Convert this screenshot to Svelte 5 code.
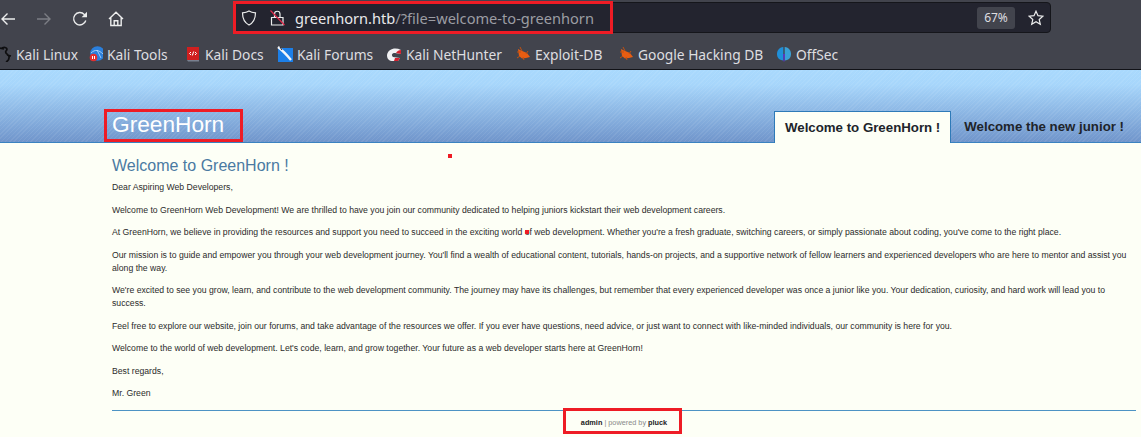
<script>
	// width of each toolbar item, text and icon together
	const bookmarks = [
		{ label: 'Kali Linux', icon: 'dragon', width: 91 },
		{ label: 'Kali Tools', icon: 'tools', width: 98 },
		{ label: 'Kali Docs', icon: 'docs', width: 92 },
		{ label: 'Kali Forums', icon: 'forums', width: 109 },
		{ label: 'Kali NetHunter', icon: 'hunter', width: 129 },
		{ label: 'Exploit-DB', icon: 'bug', width: 103 },
		{ label: 'Google Hacking DB', icon: 'bug', width: 158 },
		{ label: 'OffSec', icon: 'offsec', width: 70 }
	];

	const paragraphs = [
		'Dear Aspiring Web Developers,',
		'Welcome to GreenHorn Web Development! We are thrilled to have you join our community dedicated to helping juniors kickstart their web development careers.',
		"At GreenHorn, we believe in providing the resources and support you need to succeed in the exciting world of web development. Whether you're a fresh graduate, switching careers, or simply passionate about coding, you've come to the right place.",
		"Our mission is to guide and empower you through your web development journey. You'll find a wealth of educational content, tutorials, hands-on projects, and a supportive network of fellow learners and experienced developers who are here to mentor and assist you along the way.",
		"We're excited to see you grow, learn, and contribute to the web development community. The journey may have its challenges, but remember that every experienced developer was once a junior like you. Your dedication, curiosity, and hard work will lead you to success.",
		'Feel free to explore our website, join our forums, and take advantage of the resources we offer. If you ever have questions, need advice, or just want to connect with like-minded individuals, our community is here for you.',
		"Welcome to the world of web development. Let's code, learn, and grow together. Your future as a web developer starts here at GreenHorn!",
		'Best regards,',
		'Mr. Green'
	];
</script>

<div class="browser">
	<div class="toolbar">
		<div class="nav">
			<svg width="16" height="16" viewBox="0 0 16 16" class="ico"><path d="M15 8H2M7.500 2.500 2 8l5.500 5.500" /></svg>
			<svg width="16" height="16" viewBox="0 0 16 16" class="ico off"><path d="M1 8h13M8.500 2.500 14 8l-5.500 5.500" /></svg>
			<svg width="16" height="16" viewBox="0 0 16 16" class="ico"><path d="M13.800 9.500A6.200 6.200 0 1 1 12.300 3.400L14.500 5.500" /><path class="fill" d="M15 .8v5.400H9.600z" /></svg>
			<svg width="16" height="16" viewBox="0 0 16 16" class="ico"><path d="M1 8 8 1.300 15 8M2.800 6.600v7.900h10.400V6.600M6.200 14.500V9.800h3.600v4.700" /></svg>
		</div>
		<div class="urlbar">
			<div class="url-main">
				<svg width="16" height="16" viewBox="0 0 16 16" class="ico thin"><path d="M8 1C6 2.300 3.800 2.700 1.500 2.800 1.500 8 3 12.500 8 15 13 12.500 14.500 8 14.500 2.800 12.200 2.700 10 2.300 8 1Z" /></svg>
				<svg width="16" height="16" viewBox="0 0 16 16" class="ico thin lock">
					<path d="M1.500 7.500h11.500v7.500H1.500zM4.500 7.500V4a2.700 2.700 0 0 1 5.500 0v3.500" />
					<path class="slash" d="M.5 .5 14.500 15" />
				</svg>
				<span class="url"><span class="host">greenhorn.htb</span>/?file=welcome-to-greenhorn</span>
			</div>
			<div class="url-end">
				<span class="zoom">67%</span>
				<svg width="16" height="16" viewBox="0 0 16 16" class="ico thin"><path d="M8 1.200 10 5.700 14.900 6.200 11.200 9.500 12.300 14.300 8 11.800 3.700 14.300 4.800 9.500 1.100 6.200 6 5.700Z" /></svg>
			</div>
			<span class="mark url-mark"></span>
		</div>
	</div>

	<div class="bookmarks">
		{#each bookmarks as b}
			<div class="bookmark" style="width: {b.width}px">
				<svg width="16" height="16" viewBox="0 0 16 16">
					{#if b.icon === 'dragon'}
						<path d="M5 3C8 0 13 2 10 5 8 8 14 8 13 12c0 2-1 3-3 4M8 3 4 2M11 9l4 1" fill="none" stroke="#0e0e10" stroke-width="1.700" />
					{:else if b.icon === 'tools'}
						<circle cx="10.500" cy="7.500" r="7.300" fill="#2a7fdc" />
						<path d="M4 7c4-4 8-3 12 1M10 4l4 8" fill="none" stroke="#bfe0fb" stroke-width=".8" />
						<circle cx="6.500" cy="11.500" r="3.800" fill="#e32f2f" />
						<path d="M5.500 10v3M7.500 10v3" stroke="#fff" />
					{:else if b.icon === 'docs'}
						<path d="M2 1h12v13H2z" fill="#d01f1f" />
						<path d="M2 14h12v1.500H3z" fill="#79808f" />
						<path d="M6 6 4.500 7.500 6 9M10 6l1.500 1.500L10 9M8.700 5.500 7.300 9.500" fill="none" stroke="#fff" />
					{:else if b.icon === 'forums'}
						<path d="M1 2h15v14H1z" fill="#1c7fe8" />
						<path d="M1 1c4 3 8 7 13 13" fill="none" stroke="#f2f5fa" stroke-width="2.400" />
						<path d="M3 1 5 4" stroke="#22242a" />
					{:else if b.icon === 'hunter'}
						<path d="M1 9C2 3 9 1 15 4v4l-6-1c-3 0-4 2-2 4l7 1-2 3H7C3 15 1 13 1 9Z" fill="#f1f1f3" />
						<path d="M15 4v4l-5-1c1-2 3-3 5-3Zm-1 8-2 3H8l1-3Z" fill="#d3202f" />
					{:else if b.icon === 'bug'}
						<path d="M3 3 6 4.500 12 7 15 11 11 12 7 12.500 4 10Z" fill="#e85d12" />
						<path d="M2 6h4M2 12l3-2M5 1l2 4M9 14l-1-3M13 5l-2 3" stroke="#c4500f" fill="none" />
					{:else}
						<path d="M7.300 1C3 1.500 1 4.500 1 8s2 6 6.300 6.500Z" fill="#1f8fd8" />
						<path d="M8.700 1c4.300.5 6.300 3.500 6.300 7s-2 6-6.300 6.500Z" fill="#3aa0d6" />
						<path d="M7 8h2l-.5 7.500h-1z" fill="#5b35c4" />
					{/if}
				</svg>
				<span>{b.label}</span>
			</div>
		{/each}
	</div>
</div>

<div class="page">
	<header class="head">
		<div class="logo">
			GreenHorn
			<span class="mark logo-mark"></span>
		</div>
		<nav class="tabs">
			<div class="tab active">Welcome to GreenHorn !</div>
			<div class="tab">Welcome the new junior !</div>
		</nav>
	</header>

	<main class="content">
		<h1>Welcome to GreenHorn !</h1>
		{#each paragraphs as p}
			<p>{p}</p>
		{/each}
		<footer class="foot">
			<span><b>admin</b> | powered by <b>pluck</b></span>
			<span class="mark foot-mark"></span>
		</footer>
	</main>
	<span class="dot dot-a"></span>
	<span class="dot dot-b"></span>
</div>

<style>
	:global(body) {
		margin: 0;
		min-height: 100vh;
		background: #fdfff6;
	}
	.browser {
		height: 70px;
		background: #42444d;
		border-bottom: 1px solid #111217;
		box-sizing: border-box;
		font-family: "Noto Sans", sans-serif;
		color: #dedee0;
	}
	.toolbar {
		height: 36px;
		display: flex;
		align-items: flex-start;
		padding-top: 2px;
		box-sizing: border-box;
	}
	.nav {
		width: 233px;
		flex: none;
		display: flex;
		gap: 20px;
		padding-top: 9px;
		box-sizing: border-box;
	}
	.ico {
		fill: none;
		stroke: #eceded;
		stroke-width: 1.400;
	}
	.ico.off { stroke: #7c7e85; }
	.ico.thin { stroke-width: 1.200; }
	.ico .fill {
		fill: #eceded;
		stroke: none;
	}
	.lock .slash { stroke: #e0294a; }
	.urlbar {
		position: relative;
		width: 818px;
		height: 31px;
		background: #23242f;
		border: 1px solid #15161b;
		border-radius: 4px;
		box-sizing: border-box;
		display: flex;
		align-items: center;
		justify-content: space-between;
		padding: 0 6px 0 7px;
	}
	.url-main {
		display: flex;
		align-items: center;
		gap: 10px;
	}
	.url-main .lock { margin-left: 3px; }
	.url {
		font-size: 14.600px;
		color: #9c9da3;
		margin-left: -1px;
		white-space: nowrap;
	}
	.host { color: #e9e9eb; }
	.url-end {
		display: flex;
		align-items: center;
		gap: 13px;
	}
	.zoom {
		width: 38px;
		height: 22px;
		line-height: 22px;
		text-align: center;
		font-size: 12px;
		background: #42444d;
		border-radius: 3px;
	}
	.mark {
		position: absolute;
		border: 3px solid #ee1c25;
		box-sizing: border-box;
		pointer-events: none;
	}
	.url-mark {
		left: -1px;
		top: -2px;
		width: 380px;
		height: 33px;
	}
	.bookmarks {
		height: 33px;
		display: flex;
		align-items: center;
		font-size: 13.800px;
		padding-top: 3px;
		margin-left: -4px;
		box-sizing: border-box;
	}
	.bookmark {
		flex: none;
		display: flex;
		align-items: center;
		gap: 4px;
		white-space: nowrap;
	}
	.bookmark svg { flex: none; }
	.page {
		position: relative;
		font-family: "Liberation Sans", Arial, sans-serif;
	}
	.head {
		height: 73px;
		box-sizing: border-box;
		border-bottom: 1px solid #3a82c0;
		display: flex;
		justify-content: space-between;
		align-items: flex-end;
		padding-left: 112px;
		background:
			repeating-linear-gradient(135deg, rgba(255, 255, 255, .07) 0 1px, transparent 1px 3px),
			linear-gradient(#a9d9fd, #a7d6fb 20%, #7095cb);
	}
	.logo {
		position: relative;
		color: #fff;
		font-size: 22.700px;
		line-height: 26px;
		padding-bottom: 5px;
	}
	.logo-mark {
		left: -8px;
		top: -2px;
		width: 139px;
		height: 33px;
	}
	.tabs {
		display: flex;
	}
	.tab {
		font-size: 13.270px;
		font-weight: bold;
		color: #20242a;
		height: 31px;
		line-height: 31px;
		box-sizing: border-box;
		padding: 0 17px 0 13px;
		white-space: nowrap;
	}
	.tab.active {
		background: #fdfff6;
		border: 1px solid #2e7ab8;
		border-bottom: none;
		height: 32px;
		margin-bottom: -1px;
		line-height: 32px;
		padding: 0 10px;
	}
	.content {
		padding: 13px 5px 0 112px;
		font-size: 8.680px;
		line-height: 13px;
		color: #2b2b2b;
	}
	h1 {
		margin: 0 0 5px;
		font-size: 16px;
		line-height: 20px;
		font-weight: normal;
		color: #4a7aa2;
	}
	p {
		margin: 0 0 9.500px;
	}
	.foot {
		position: relative;
		margin-top: 9.500px;
		border-top: 1px solid #4d93c4;
		text-align: center;
		font-size: 7.300px;
		line-height: 12px;
		padding-top: 6px;
		color: #8a8a8a;
	}
	.foot b { color: #222; }
	.foot-mark {
		left: 451px;
		top: -3px;
		width: 119px;
		height: 26px;
	}
	.dot {
		position: absolute;
		width: 4px;
		height: 4px;
		background: #ee1c25;
	}
	.dot-a { left: 448px; top: 84px; }
	.dot-b { left: 525px; top: 160px; }
</style>
